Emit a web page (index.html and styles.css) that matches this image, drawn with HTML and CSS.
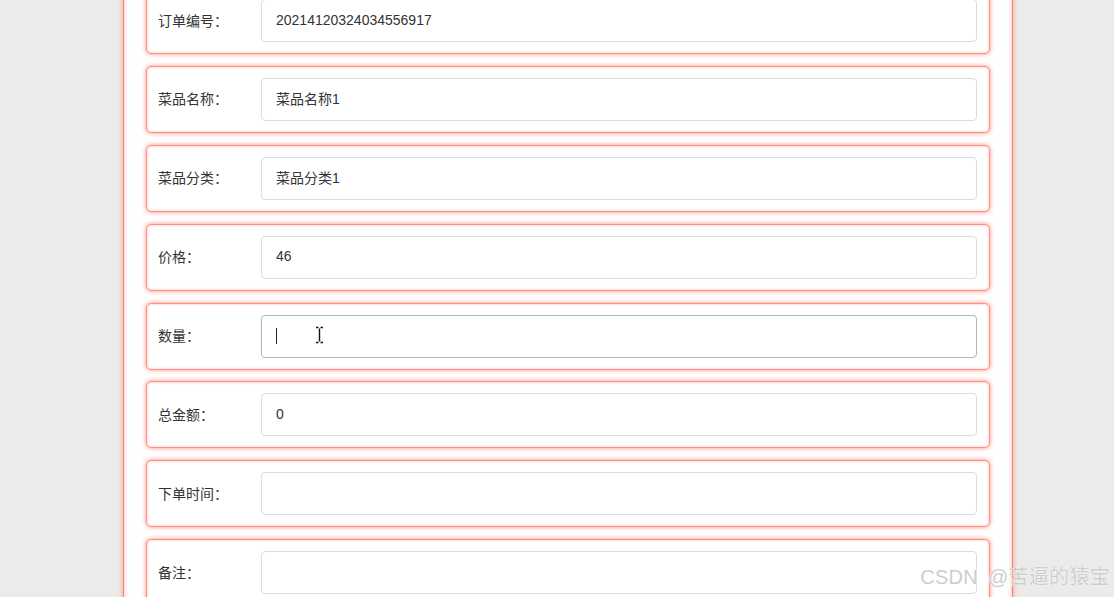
FILE: index.html
```html
<!DOCTYPE html>
<html lang="zh-CN">

<head>
  <meta charset="UTF-8">
  <meta name="viewport" content="width=device-width, initial-scale=1.0">
  <title>订单编辑</title>
  <link rel="stylesheet" href="styles.css">
</head>

<body>
  <div id="container">
    <form id="order-form">
      <div class="form-row">
        <label for="order-no">订单编号：</label>
        <input type="text" id="order-no" value="20214120324034556917" />
      </div>
      <div class="form-row">
        <label for="dish-name">菜品名称：</label>
        <input type="text" id="dish-name" value="菜品名称1" />
      </div>
      <div class="form-row">
        <label for="dish-type">菜品分类：</label>
        <input type="text" id="dish-type" value="菜品分类1" />
      </div>
      <div class="form-row">
        <label for="price">价格：</label>
        <input type="text" id="price" value="46" />
      </div>
      <div class="form-row">
        <label for="amount">数量：</label>
        <div class="field">
          <input type="text" id="amount" class="active" value="" />
          <span class="caret"></span>
          <svg class="ibeam" width="9" height="18" viewBox="0 0 9 18">
            <path d="M1 1.5h2.5M5.5 1.5H8M4.5 2.5v13M1 16.5h2.5M5.5 16.5H8" stroke="#111" stroke-width="1.4" fill="none" />
          </svg>
        </div>
      </div>
      <div class="form-row">
        <label for="total">总金额：</label>
        <input type="text" id="total" value="0" />
      </div>
      <div class="form-row">
        <label for="order-time">下单时间：</label>
        <input type="text" id="order-time" value="" />
      </div>
      <div class="form-row">
        <label for="remark">备注：</label>
        <input type="text" id="remark" value="" />
      </div>
    </form>
  </div>

  <div class="watermark">CSDN @苦逼的猿宝</div>
</body>

</html>
```

FILE: styles.css
```css
* {
  margin: 0;
  padding: 0;
  box-sizing: border-box;
}

body {
  background-color: #ebebe9;
  font-family: "Liberation Sans", "Noto Sans CJK SC", sans-serif;
  height: 597px;
  overflow: hidden;
}

#container {
  width: 890px;
  margin-left: 123px;
  margin-top: -41px;
  padding: 27px 22px 40px 22px;
  background-color: #fff;
  border: 1px solid #ff7f72;
  box-shadow: 0 0 5px #ff9e94, inset 0 0 4px #ffb0a8;
}

#order-form {
  display: flex;
  flex-direction: column;
  gap: 11.9px;
}

.form-row {
  display: flex;
  align-items: center;
  height: 67px;
  padding: 0 12px 0 11px;
  background-color: #fff;
  border: 1px solid #ff8e80;
  border-radius: 5px;
  box-shadow: 0 0 5px #ff9080, inset 0 0 3px #ffc0b8;
}

label {
  width: 103px;
  flex-shrink: 0;
  padding-bottom: 2px;
  font-size: 14px;
  color: #333;
}

input,
.field {
  flex: 1;
  height: 43px;
}

input {
  width: 100%;
  padding: 0 14px 2px;
  border: 1px solid #dcdcdc;
  border-radius: 4px;
  font-family: inherit;
  font-size: 14px;
  color: #333;
  outline: none;
}

input.active {
  border-color: #b4b4b4;
}

.field {
  position: relative;
  display: flex;
}

.caret {
  position: absolute;
  left: 15px;
  top: 13px;
  width: 1px;
  height: 16px;
  background-color: #222;
}

.ibeam {
  position: absolute;
  left: 54px;
  top: 11px;
}

.watermark {
  position: absolute;
  right: 4px;
  bottom: 7px;
  font-size: 20px;
  word-spacing: 4px;
  letter-spacing: 0.3px;
  color: #cdcdcd;
  text-shadow: 0 0 1px #fff, 0 0 1px #fff;
}
```
